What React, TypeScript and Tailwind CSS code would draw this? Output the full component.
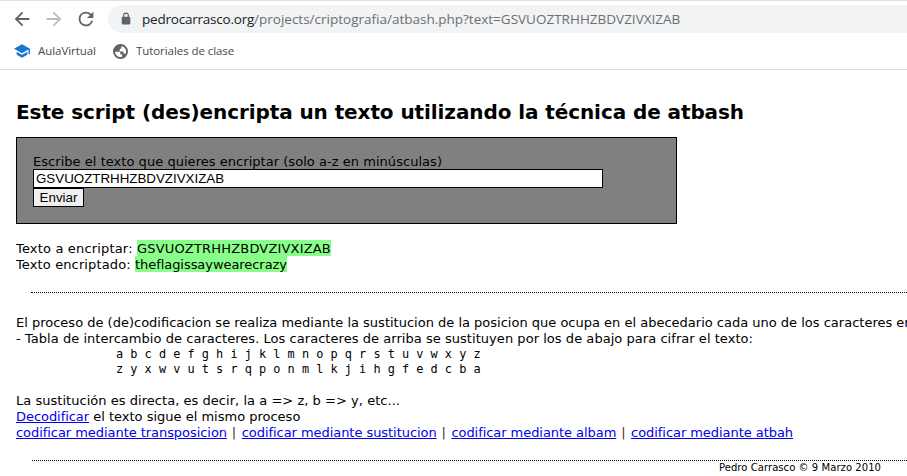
import type { ReactNode } from "react";

function Link({ children }: { children: ReactNode }) {
  return (
    <a href="#" className="text-[#0000ee] underline tracking-[-0.053px]">
      {children}
    </a>
  );
}

function Divider() {
  return <span className="whitespace-pre tracking-[0.7px] text-[#333]"> | </span>;
}

function BrowserBar() {
  return (
    <header className="h-[70px] border-t border-b border-t-[#dee1e6] border-b-[#dadce0] bg-white font-['Open_Sans',sans-serif]">
      <div className="mt-1 flex h-7 items-center">
        <svg className="ml-[11px] size-[22px] shrink-0" viewBox="0 0 24 24" fill="#5f6368">
          <path d="M20 11H7.83l5.59-5.59L12 4l-8 8 8 8 1.41-1.41L7.83 13H20v-2z" />
        </svg>
        <svg className="ml-[10px] size-[22px] shrink-0" viewBox="0 0 24 24" fill="#babcbe">
          <path d="M12 4l-1.41 1.41L16.17 11H4v2h12.17l-5.58 5.59L12 20l8-8z" />
        </svg>
        <svg className="ml-[10px] size-[22px] shrink-0" viewBox="0 0 24 24" fill="#5f6368">
          <path d="M17.65 6.35A7.958 7.958 0 0 0 12 4a8 8 0 1 0 7.73 10h-2.08A6 6 0 1 1 12 6c1.66 0 3.14.69 4.22 1.78L13 11h7V4l-2.35 2.35z" />
        </svg>
        <div className="ml-[11px] flex h-7 flex-1 items-center rounded-l-full bg-[#f1f3f4] pl-[11px]">
          <svg className="size-[14px] shrink-0" viewBox="0 0 24 24" fill="#5f6368">
            <path d="M17.500 8H17V6A5 5 0 0 0 7 6v2h-.5A1.800 1.800 0 0 0 4.700 9.800v10A1.800 1.800 0 0 0 6.500 21.600h11a1.800 1.800 0 0 0 1.800-1.800v-10A1.800 1.800 0 0 0 17.500 8zM8.900 8V6a3.100 3.100 0 0 1 6.200 0v2z" />
          </svg>
          <div className="ml-[9px] whitespace-nowrap text-[13.5px] leading-7 text-[#6b6f73]">
            <span className="tracking-[-0.22px] text-[#202124]">pedrocarrasco.org</span>
            <span>/projects/criptografia/atbash.php?text=GSVUOZTRHHZBDVZIVXIZAB</span>
          </div>
        </div>
      </div>
      <div className="mt-2 flex h-5 items-center text-[11.5px] leading-5 text-[#46494d]">
        <svg className="ml-[14px] size-4" viewBox="0 0 24 24" fill="#1976d2">
          <path d="M4 13.200v4.500L12 22l8-4.300v-4.500L12 17.500zM12 2 0 8.700l12 6.600 9.800-5.400V17H24V8.700z" />
        </svg>
        <span className="ml-2 w-[75px] tracking-[-0.05px]">AulaVirtual</span>
        <svg className="size-[15px]" viewBox="1 1 14 14" fill="#5f6368" fillRule="evenodd">
          <path d="M8 1a7 7 0 1 0 0 14A7 7 0 0 0 8 1zM2.800 8.200h3.400c1 0 1.700.6 1.700 1.500v1h1.600v2.200c-.5.2-1 .3-1.500.3a5.200 5.200 0 0 1-5.200-5zM8.800 2.900C11.300 3.300 13.200 5.400 13.200 8c0 .8-.2 1.500-.5 2.200H11v-.9C11 8.500 10.400 8 9.600 8H7.200V6.300c0-.9 1.600-.5 1.600-1.500z" />
        </svg>
        <span className="ml-2 tracking-[-0.07px]">Tutoriales de clase</span>
      </div>
    </header>
  );
}

export default function App() {
  return (
    <div className="h-[476px] w-full overflow-hidden bg-white text-black">
      <BrowserBar />
      <main className="pl-4 font-['DejaVu_Sans',sans-serif] text-[13px] leading-4 whitespace-nowrap">
        <h1 className="pt-[30px] text-[20px] leading-[25px] font-bold tracking-[-0.088px]">
          Este script (des)encripta un texto utilizando la técnica de atbash
        </h1>
        <form className="mt-3 flex h-[87px] w-[661px] flex-col items-start border border-black bg-[#808080] pt-[15px] pl-4">
          <label className="h-4 leading-[18px] tracking-[0.038px]">
            Escribe el texto que quieres encriptar (solo a-z en minúsculas)
          </label>
          <input
            className="h-[19px] w-[570px] border border-black bg-white px-0.5 font-['Liberation_Sans',sans-serif] text-[13.333px]"
            defaultValue="GSVUOZTRHHZBDVZIVXIZAB"
          />
          <button
            type="button"
            className="h-[19px] w-[51px] border border-black bg-[#efefef] font-['Liberation_Sans',sans-serif] text-[13.333px] leading-4"
          >
            Enviar
          </button>
        </form>
        <div className="mt-4 flex h-4 leading-[18px]">
          <span className="w-[121px] tracking-[0.17px]">Texto a encriptar:</span>
          <span className="bg-[#88ff88] tracking-[0.18px]">GSVUOZTRHHZBDVZIVXIZAB</span>
        </div>
        <div className="flex h-4 leading-[18px]">
          <span className="w-[119px] tracking-[0.125px]">Texto encriptado:</span>
          <span className="bg-[#88ff88] tracking-[-0.055px]">theflagissaywearecrazy</span>
        </div>
        <div className="mt-5 ml-[15px] border-t border-dotted border-black" />
        <p className="mt-[22px]">
          El proceso de (de)codificacion se realiza mediante la sustitucion de la posicion que ocupa en el abecedario
          cada uno de los caracteres en
        </p>
        <p className="tracking-[0.045px]">
          - Tabla de intercambio de caracteres. Los caracteres de arriba se sustituyen por los de abajo para cifrar el
          texto:
        </p>
        <pre className="pl-[100px] font-['DejaVu_Sans_Mono',monospace] text-[11.88px] leading-[15px]">
          {"a b c d e f g h i j k l m n o p q r s t u v w x y z\nz y x w v u t s r q p o n m l k j i h g f e d c b a"}
        </pre>
        <p className="mt-4 tracking-[0.036px]">{"La sustitución es directa, es decir, la a => z, b => y, etc..."}</p>
        <p>
          <Link>Decodificar</Link> el texto sigue el mismo proceso
        </p>
        <p>
          <Link>codificar mediante transposicion</Link>
          <Divider />
          <Link>codificar mediante sustitucion</Link>
          <Divider />
          <Link>codificar mediante albam</Link>
          <Divider />
          <Link>codificar mediante atbah</Link>
        </p>
        <div className="mt-[19px] ml-4 border-t border-dotted border-black" />
        <footer className="pr-[26px] text-right text-[10px] leading-[13px] tracking-[0.06px]">
          Pedro Carrasco © 9 Marzo 2010
        </footer>
      </main>
    </div>
  );
}
